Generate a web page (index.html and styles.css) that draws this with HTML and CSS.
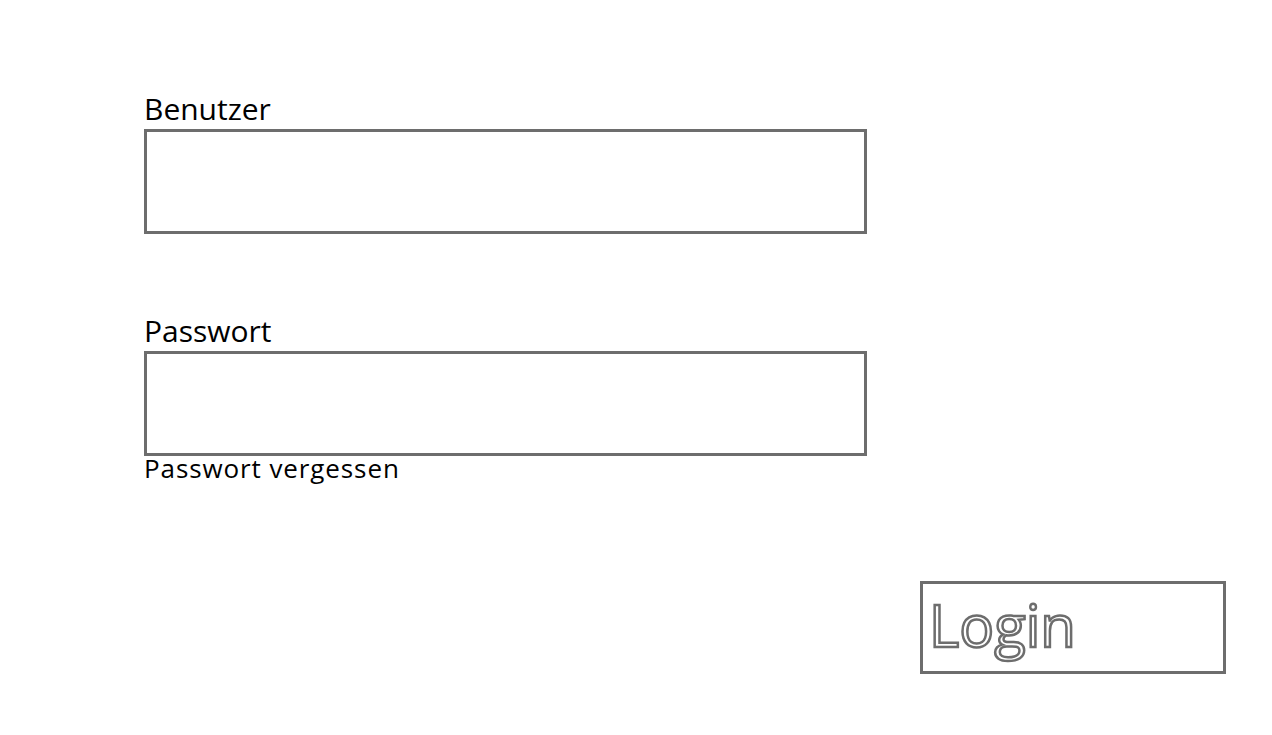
FILE: index.html
```html
<!DOCTYPE html>
<html lang="de">
<head>
<meta charset="utf-8">
<title>Login</title>
<link rel="stylesheet" href="styles.css">
</head>
<body>
<main class="page">
  <div class="field">
    <label class="label">Benutzer</label>
    <div class="box"></div>
  </div>
  <div class="field field-pw">
    <label class="label">Passwort</label>
    <div class="box"></div>
    <a class="forgot">Passwort vergessen</a>
  </div>
  <div class="actions">
    <div class="login"><span class="login-text">Login</span></div>
  </div>
</main>
</body>
</html>
```
FILE: styles.css
```css
html, body {
  margin: 0;
  padding: 0;
  background: #ffffff;
}
.page {
  font-family: "Open Sans", "Noto Sans", sans-serif;
  color: #000;
  padding: 88px 0 0 144px;
  display: flex;
  flex-direction: column;
}
.field {
  display: flex;
  flex-direction: column;
  width: 723px;
}
.field-pw {
  margin-top: 76px;
}
.label {
  font-size: 30px;
  line-height: 41px;
  height: 41px;
}
.box {
  box-sizing: border-box;
  height: 105px;
  border: 3px solid #6d6d6d;
}
.forgot {
  font-size: 26px;
  line-height: 24px;
  letter-spacing: 0.9px;
  margin-top: 0;
}
.actions {
  display: flex;
  margin-top: 101px;
  margin-left: 776px;
}
.login {
  box-sizing: border-box;
  width: 306px;
  height: 93px;
  border: 3px solid #6d6d6d;
  display: flex;
  align-items: center;
  padding: 0 0 6px 6px;
}
.login-text {
  font-size: 58px;
  line-height: 66px;
  color: #fff;
  -webkit-text-stroke: 2.5px #6d6d6d;
}
```
